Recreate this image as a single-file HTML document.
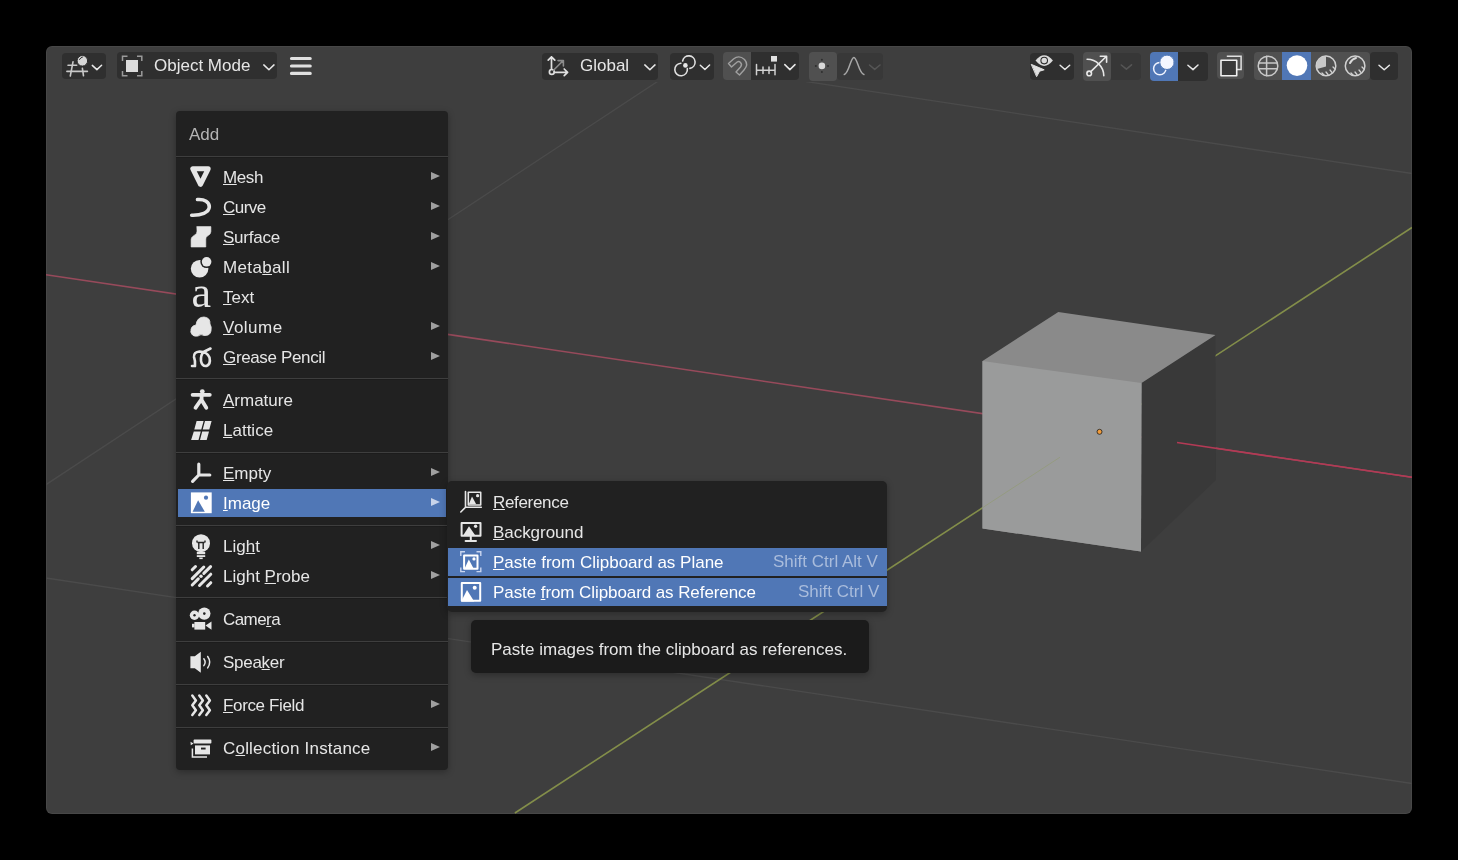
<!DOCTYPE html>
<html><head><meta charset="utf-8">
<style>
*{margin:0;padding:0;box-sizing:border-box}
html,body{width:1458px;height:860px;background:#000;overflow:hidden}
body{position:relative;font-family:"Liberation Sans",sans-serif}
.win{position:absolute;left:46px;top:46px;width:1366px;height:768px;background:#3e3e3e;border-radius:6px;overflow:hidden;box-shadow:inset 0 0 0 1px rgba(255,255,255,0.05)}
.abs{position:absolute}
.t{position:absolute;font-size:17px;line-height:20px;white-space:pre;color:#e6e6e6;will-change:transform}
.btn{position:absolute;background:#2f2f2f;border-radius:4px}
.menu{position:absolute;background:#212121;border-radius:5px;box-shadow:0 2px 7px rgba(0,0,0,0.3)}
.sep{position:absolute;height:1px;background:#3e3e3e;box-shadow:0 1px 0 #1c1c1c}
.hl{position:absolute;background:#5077b6}
.arr{position:absolute;width:0;height:0;border-left:9px solid #a0a0a0;border-top:4.6px solid transparent;border-bottom:4.6px solid transparent;margin-top:-0.2px}
u{text-decoration:underline;text-decoration-thickness:1.4px;text-underline-offset:1.4px}
</style></head><body>
<div class="win"></div>
<svg class="abs" style="left:0;top:0" width="1458" height="860" viewBox="0 0 1458 860">
  <defs><clipPath id="below"><rect x="0" y="82" width="1458" height="800"/></clipPath><clipPath id="wc"><rect x="46" y="46" width="1366" height="768" rx="6"/></clipPath></defs>
  <g clip-path="url(#wc)">
    <!-- faint grid lines -->
    <g clip-path="url(#below)">
    <line x1="46" y1="484.6" x2="684" y2="64" stroke="#4b4b4b" stroke-width="1.3"/>
    <line x1="684" y1="63" x2="1412" y2="173.5" stroke="#4b4b4b" stroke-width="1.3"/>
    </g>
    <line x1="46" y1="578" x2="1412" y2="783.5" stroke="#4b4b4b" stroke-width="1.3"/>
    <!-- red x axis -->
    <line x1="46" y1="274.8" x2="1412" y2="477.3" stroke="#974a5b" stroke-width="1.6"/>
    <!-- green y axis -->
    <line x1="514.9" y1="813" x2="1412" y2="227.5" stroke="#838e4a" stroke-width="1.6"/>
    <!-- cube -->
    <polygon points="1141.5,383 1215.5,335 1216,480 1141,551.5" fill="#393939"/>
    <polygon points="982.5,361 1058.3,312 1215.5,335 1141.5,383 1141,551.5 982.5,528.5" fill="#8a8a8a"/>
    <polygon points="982.5,361 1141.5,383 1141,551.5 982.5,528.5" fill="#9a9b9b"/>
    <line x1="1177" y1="442.6" x2="1412" y2="477.3" stroke="#b33a55" stroke-width="1.5"/>
    <line x1="1060" y1="457.2" x2="983" y2="507.4" stroke="#8c9a5a" stroke-width="1" opacity="0.4"/>
    <circle cx="1099.5" cy="431.8" r="2.5" fill="#f39c3a" stroke="#1a1a1a" stroke-width="0.8"/>
  </g>
</svg>

<!-- header buttons -->
<div class="btn" style="left:62px;top:53px;width:44px;height:26px"></div>
<div class="btn" style="left:117px;top:52px;width:160px;height:27px"></div>
<div class="t" style="left:153.5px;top:55.5px">Object Mode</div>
<div class="btn" style="left:542px;top:53px;width:116px;height:27px"></div>
<div class="t" style="left:580px;top:55.5px">Global</div>
<div class="btn" style="left:670px;top:53px;width:44px;height:27px"></div>
<div class="abs" style="left:723px;top:52px;width:28px;height:28px;background:#505050;border-radius:4px 0 0 4px"></div>
<div class="abs" style="left:751px;top:52px;width:48px;height:28px;background:#2f2f2f;border-radius:0 4px 4px 0"></div>
<div class="abs" style="left:809px;top:52px;width:28px;height:29px;background:#505050;border-radius:4px"></div>
<div class="abs" style="left:837px;top:53px;width:46px;height:27px;background:#383838;border-radius:4px"></div>
<div class="btn" style="left:1030px;top:53px;width:44px;height:27px"></div>
<div class="abs" style="left:1083px;top:52px;width:28px;height:29px;background:#505050;border-radius:4px"></div>
<div class="abs" style="left:1111px;top:53px;width:30px;height:27px;background:#373737;border-radius:0 4px 4px 0"></div>
<div class="abs" style="left:1150px;top:52px;width:28px;height:29px;background:#5077b6;border-radius:4px 0 0 4px"></div>
<div class="abs" style="left:1178px;top:52px;width:30px;height:29px;background:#2f2f2f;border-radius:0 4px 4px 0"></div>
<div class="abs" style="left:1217px;top:52px;width:27px;height:27px;background:#505050;border-radius:4px"></div>
<div class="abs" style="left:1254px;top:52px;width:28px;height:28px;background:#505050;border-radius:4px 0 0 4px"></div>
<div class="abs" style="left:1282px;top:52px;width:29px;height:28px;background:#5077b6"></div>
<div class="abs" style="left:1311px;top:52px;width:29px;height:28px;background:#505050"></div>
<div class="abs" style="left:1340px;top:52px;width:30px;height:28px;background:#505050;border-radius:0 4px 4px 0"></div>
<div class="abs" style="left:1370px;top:52px;width:28px;height:28px;background:#2f2f2f;border-radius:4px"></div>


<!-- header icons -->
<svg class="abs" style="left:0;top:0" width="1458" height="100" viewBox="0 0 1458 100" fill="none" stroke-linecap="round" stroke-linejoin="round">
  <g stroke="#c8c8c8" stroke-width="1.6">
    <path d="M68 65.2H76.7M66.9 71.4H87.4M73 61.8L70.3 76M82.4 68.3L83.5 75.8"/>
  </g>
  <circle cx="82.4" cy="60.8" r="5.3" fill="#d6d6d6" stroke="#2c2c2c" stroke-width="1"/>
  <path d="M79.5 59.5Q80.5 57.5 82.5 57" stroke="#2c2c2c" stroke-width="1"/>
  <g stroke="#e8e8e8" stroke-width="1.5">
    <path d="M92.3 65.4L96.9 69.6L101.6 65.2"/>
    <path d="M263.8 64.9L268.9 69.8L274 64.9"/>
    <path d="M644.8 64.9L649.9 69.8L655 64.9"/>
    <path d="M700.3 65.2L704.9 69.5L709.6 65"/>
    <path d="M784.8 64.6L789.9 69.6L795 64.6"/>
    <path d="M1060.1 65.3L1064.9 69.5L1069.7 65.2"/>
    <path d="M1187.9 65.2L1193 69.6L1198 65"/>
    <path d="M1379 65.2L1384.2 69.8L1389.4 65.2"/>
  </g>
  <path d="M1121.3 65L1126.4 69.2L1131.5 64.8" stroke="#555" stroke-width="1.6"/>
  <path d="M869.5 65L874.7 69.4L880 65" stroke="#555" stroke-width="1.6"/>
  <!-- object mode icon -->
  <rect x="126" y="60" width="12" height="12" fill="#dcdcdc"/>
  <path d="M122.5 61V56.2H127.5M137 56.2H141.8V61M141.8 71V75.8H137M127.5 75.8H122.5V71" stroke="#9a9a9a" stroke-width="1.5" stroke-linecap="butt" stroke-linejoin="miter"/>
  <!-- hamburger -->
  <path d="M291.5 58.5H310.2M291.5 66H310.2M291.5 73.4H310.2" stroke="#e0e0e0" stroke-width="3.2"/>
  <!-- transform orientation icon -->
  <g stroke="#e0e0e0" stroke-width="1.7">
    <path d="M551.5 69V56.8M548.2 60.2L551.5 56.8L554.8 60.2"/>
    <path d="M554.5 72.3H567.5M564.2 69L567.6 72.3L564.2 75.6"/>
    <circle cx="551.8" cy="71.9" r="2.4"/>
  </g>
  <path d="M553.5 70.2L563 60.8M558 60.6H563.4V66" stroke="#8c8c8c" stroke-width="1.6"/>
  <!-- pivot icon -->
  <g stroke="#e0e0e0" stroke-width="1.6">
    <path d="M687.34 68.62A6.3 6.3 0 1 1 680.88 63.20"/>
    <path d="M682.62 61.00A6.3 6.3 0 1 1 689.89 68.40"/>
  </g>
  <circle cx="685.4" cy="65.4" r="2.3" fill="#e8e8e8"/>
  <!-- magnet -->
  <path d="M728.5 63.5L733.5 59Q739 54.5 744.5 59.5Q749 64.5 744 70L739.5 75L736 72L740.5 67Q742.5 64.5 740.5 62.5Q738.5 60.5 736 63L731.5 67Z" stroke="#a0a0a0" stroke-width="1.4"/>
  <!-- snap target -->
  <g stroke="#d0d0d0" stroke-width="1.5">
    <path d="M756.5 64.5V74.8M775 64.5V74.8M763 67V73.5M769 67V73.5M756.5 70.3H775"/>
  </g>
  <rect x="771" y="56" width="6" height="5.6" fill="#e0e0e0"/>
  <!-- proportional -->
  <circle cx="821.9" cy="65.9" r="3.3" fill="#d8d8d8"/>
  <g fill="#2e2e2e"><circle cx="821.9" cy="59.8" r="1"/><circle cx="821.9" cy="72" r="1"/><circle cx="815.8" cy="65.9" r="1"/><circle cx="828" cy="65.9" r="1"/></g>
  <!-- falloff -->
  <path d="M844.3 74.5C849 73.5 850.5 57.5 853.9 57.5C857.3 57.5 858.8 73.5 863.9 74.5" stroke="#a8a8a8" stroke-width="1.5"/>
  <!-- visibility -->
  <path d="M1035.5 60.6Q1044.2 50 1052.9 60.6Q1044.2 71.2 1035.5 60.6Z" fill="#dcdcdc"/>
  <circle cx="1044.2" cy="60.6" r="3.3" fill="#dcdcdc" stroke="#2c2c2c" stroke-width="1.1"/>
  <path d="M1031.6 64.5L1044.2 69.8L1039.6 71.2L1036.8 76.3Z" fill="#e0e0e0" stroke="#e0e0e0" stroke-width="1"/>
  <!-- gizmo -->
  <g stroke="#e8e8e8" stroke-width="1.6">
    <path d="M1087.1 59.3A16.5 16.5 0 0 1 1103.8 75.8"/>
    <path d="M1090.8 71.6L1106 56.8M1100.3 56.2H1106.6V62.3"/>
    <circle cx="1089.2" cy="73.4" r="2.3"/>
  </g>
  <!-- overlays -->
  <circle cx="1159.8" cy="68.6" r="6.2" stroke="#f0f4ff" stroke-width="1.5"/>
  <circle cx="1167" cy="62.3" r="7.2" fill="#f4f6ff" stroke="#5077b6" stroke-width="1"/>
  <!-- xray -->
  <path d="M1226.8 56.2H1241.1V69.6H1236.7" stroke="#e0e0e0" stroke-width="1.5" stroke-linecap="butt" stroke-linejoin="miter"/>
  <rect x="1221" y="60.3" width="15.7" height="15.4" fill="#393939" stroke="#f0f0f0" stroke-width="1.6"/>
  <!-- wireframe -->
  <g stroke="#c8c8c8" stroke-width="1.5">
    <circle cx="1268" cy="66" r="9.8"/>
    <path d="M1259 63H1277M1259 68.8H1277M1266.6 56.3V75.7"/>
  </g>
  <!-- solid -->
  <circle cx="1297" cy="65.6" r="10.3" fill="#ffffff"/>
  <!-- material -->
  <circle cx="1326" cy="65.9" r="9.8" stroke="#d0d0d0" stroke-width="1.5"/>
  <path d="M1326 56.1V66.5L1317 69A9.8 9.8 0 0 1 1326 56.1Z" fill="#c8c8c8"/>
  <path d="M1322 73L1324 75M1326 72L1328 74.5M1330 70L1332 72.5M1333 67L1335 69" stroke="#d0d0d0" stroke-width="1.3"/>
  <!-- rendered -->
  <circle cx="1355.1" cy="65.9" r="9.8" stroke="#d0d0d0" stroke-width="1.5"/>
  <path d="M1350 63Q1352 59 1356 58" stroke="#d8d8d8" stroke-width="2"/>
  <path d="M1351 73L1353 75M1355 72L1357 74.5M1359 70L1361 72.5M1362 67L1364 69" stroke="#d0d0d0" stroke-width="1.3"/>
</svg>

<!-- main menu -->
<div class="menu" style="left:176px;top:111px;width:272px;height:659px;border-radius:4px"></div>
<div class="t" style="left:189px;top:124.5px;color:#b4b4b4">Add</div>
<div class="sep" style="left:176px;top:156px;width:272px"></div>

<div class="hl" style="left:178px;top:489px;width:268px;height:28px"></div>

<div class="t" style="left:222.7px;top:168px;letter-spacing:-0.400px"><u>M</u>esh</div>
<div class="t" style="left:222.7px;top:198px;letter-spacing:-0.550px"><u>C</u>urve</div>
<div class="t" style="left:222.7px;top:228px;letter-spacing:-0.250px"><u>S</u>urface</div>
<div class="t" style="left:222.7px;top:258px;letter-spacing:0.357px">Meta<u>b</u>all</div>
<div class="t" style="left:222.7px;top:288px"><u>T</u>ext</div>
<div class="t" style="left:222.7px;top:318px;letter-spacing:0.480px"><u>V</u>olume</div>
<div class="t" style="left:222.7px;top:348px;letter-spacing:-0.358px"><u>G</u>rease Pencil</div>
<div class="sep" style="left:176px;top:378px;width:272px"></div>
<div class="t" style="left:222.7px;top:391px"><u>A</u>rmature</div>
<div class="t" style="left:222.7px;top:421px"><u>L</u>attice</div>
<div class="sep" style="left:176px;top:452px;width:272px"></div>
<div class="t" style="left:222.7px;top:464px"><u>E</u>mpty</div>
<div class="t" style="left:222.7px;top:494px;color:#fff"><u>I</u>mage</div>
<div class="sep" style="left:176px;top:525px;width:272px"></div>
<div class="t" style="left:222.7px;top:537px">Lig<u>h</u>t</div>
<div class="t" style="left:222.7px;top:567px">Light <u>P</u>robe</div>
<div class="sep" style="left:176px;top:597px;width:272px"></div>
<div class="t" style="left:222.7px;top:610px;letter-spacing:-0.560px">Came<u>r</u>a</div>
<div class="sep" style="left:176px;top:641px;width:272px"></div>
<div class="t" style="left:222.7px;top:653px;letter-spacing:-0.283px">Spea<u>k</u>er</div>
<div class="sep" style="left:176px;top:684px;width:272px"></div>
<div class="t" style="left:222.7px;top:696px;letter-spacing:-0.360px"><u>F</u>orce Field</div>
<div class="sep" style="left:176px;top:727px;width:272px"></div>
<div class="t" style="left:222.7px;top:739px;letter-spacing:0.200px">C<u>o</u>llection Instance</div>

<!-- arrows -->
<div class="arr" style="left:431px;top:172.5px"></div>
<div class="arr" style="left:431px;top:202.5px"></div>
<div class="arr" style="left:431px;top:232.5px"></div>
<div class="arr" style="left:431px;top:262.5px"></div>
<div class="arr" style="left:431px;top:322.5px"></div>
<div class="arr" style="left:431px;top:352.5px"></div>
<div class="arr" style="left:431px;top:468.5px"></div>
<div class="arr" style="left:431px;top:498.5px;border-left-color:#c8d4ea"></div>
<div class="arr" style="left:431px;top:541.5px"></div>
<div class="arr" style="left:431px;top:571.5px"></div>
<div class="arr" style="left:431px;top:700.5px"></div>
<div class="arr" style="left:431px;top:743.5px"></div>

<!-- submenu -->
<div class="menu" style="left:447px;top:481px;width:440px;height:131px"></div>
<div class="hl" style="left:448px;top:548px;width:439px;height:28px"></div>
<div class="hl" style="left:448px;top:578px;width:439px;height:28px"></div>
<div class="t" style="left:493px;top:493px;letter-spacing:-0.325px"><u>R</u>eference</div>
<div class="t" style="left:493px;top:523px;letter-spacing:-0.044px"><u>B</u>ackground</div>
<div class="t" style="left:493px;top:553px;color:#fff"><u>P</u>aste from Clipboard as Plane</div>
<div class="t" style="left:493px;top:583px;color:#fff;letter-spacing:-0.081px">Paste <u>f</u>rom Clipboard as Reference</div>
<div class="t" style="left:773px;top:552px;color:#a9bcdc">Shift Ctrl Alt V</div>
<div class="t" style="left:798px;top:582px;color:#a9bcdc">Shift Ctrl V</div>

<!-- tooltip -->
<div class="menu" style="left:471px;top:620px;width:398px;height:53px;background:#1b1b1b"></div>
<div class="t" style="left:490.5px;top:640px">Paste images from the clipboard as references.</div>

<!-- menu icons -->
<svg class="abs" style="left:0;top:0" width="1458" height="860" viewBox="0 0 1458 860" fill="none" stroke-linecap="round" stroke-linejoin="round">
  <g fill="#e6e6e6" stroke="#e6e6e6">
  <!-- mesh -->
  <path d="M192.8 168.8H208.2L200.5 184.3Z" fill="none" stroke-width="5"/>
  <!-- curve -->
  <path d="M197.5 199.5C204.5 199 209.5 202 209.3 207C209 212.5 201 215.5 191.7 215.2" fill="none" stroke-width="3.6"/>
  <!-- surface -->
  <path d="M197 226.6H210.9V231.5Q210.9 233.8 208.6 235.2L207.4 236Q205.8 237.2 205.8 239V247H191.1V239.5Q191.1 237.4 193 236.2L194.8 235Q197 233.6 197 231.5Z" stroke-width="0.6"/>
  <!-- metaball -->
  <circle cx="199.6" cy="268.7" r="8.8" stroke="none"/>
  <circle cx="206.6" cy="261.8" r="6.3" fill="#212121" stroke="none"/>
  <circle cx="206.6" cy="261.8" r="4.8" stroke="none"/>
  <!-- volume -->
  <path d="M191 332Q190 326 196 325Q197 317 204 317Q210.5 317.5 210 324Q212 327 211 331Q210 336 204 335.5Q201 333.5 198 336Q191.5 337 191 332Z" stroke-width="0.8"/>
  <!-- grease pencil -->
  <path d="M192 366H195Q195.5 361 194 357Q193.5 352 199.5 351.5Q207 351.5 209.5 357.5Q211 364 206.5 366Q202 366.5 201 361Q200.5 355 203.5 352L210.5 348.5" fill="none" stroke-width="2.6"/>
  <!-- armature -->
  <circle cx="202.3" cy="391.6" r="2.4" stroke="none"/>
  <path d="M192.6 394.8H209.8M201.6 395V400M201.3 399.5L195.5 407.8M201.3 399.5L206.3 407.8" fill="none" stroke-width="3.8"/>
  <!-- lattice -->
  <path d="M196.6 421H203.6L201.3 429.6H194.3ZM205 421H211.6L209.3 429.6H202.7ZM193.8 431.4H200.8L198.5 440H191.1ZM202.2 431.4H209L206.7 440H200Z" stroke="none"/>
  <!-- empty -->
  <path d="M198.8 464.2V475H209.8M198.8 475L192.6 481.3" fill="none" stroke-width="3.2"/>
  <!-- light -->
  <circle cx="201" cy="543.2" r="9" stroke="none"/>
  <path d="M197.5 542.5H204.5M198.8 542.5V549M203.2 542.5V549M197 540.5V542.5M205 540.5V542.5" fill="none" stroke="#212121" stroke-width="1.4" stroke-linecap="butt"/>
  <rect x="196.8" y="552" width="8.4" height="2.2" stroke="none"/>
  <rect x="196.8" y="555.2" width="8.4" height="1.8" stroke="none"/>
  <rect x="199.3" y="557.5" width="3.4" height="1.6" stroke="none"/>
  <!-- light probe -->
  <g fill="none" stroke-width="3">
    <path d="M192.2 569.8L195.5 566.5"/>
    <path d="M192.2 578.6L203.8 567"/>
    <path d="M192.2 585L198.3 578.9M203.8 573.4L210.6 566.6"/>
    <path d="M199.5 585.5L210.8 574.2"/>
    <path d="M207.5 586L210.8 582.7"/>
  </g>
  <circle cx="201" cy="576.2" r="1.7" stroke="none"/>
  <!-- camera -->
  <circle cx="194.5" cy="615.2" r="4.7" stroke="none"/>
  <circle cx="204.3" cy="613.6" r="6.2" stroke="none"/>
  <circle cx="194.5" cy="615.2" r="1.2" fill="#212121" stroke="none"/>
  <circle cx="204.3" cy="613.6" r="1.3" fill="#212121" stroke="none"/>
  <rect x="194.4" y="622" width="10.8" height="7.6" stroke="none"/>
  <path d="M205.5 625.5L211.5 621.6V629.8Z" stroke="none"/>
  <rect x="192" y="623.8" width="2.6" height="3.6" stroke="none"/>
  <!-- speaker -->
  <path d="M190.4 656.3H194.8L200.8 651.8V672.7L194.8 668.3H190.4Z" stroke="none"/>
  <path d="M203.83 658.81A5.5 5.5 0 0 1 203.83 665.59M207.69 656.46A10 10 0 0 1 207.69 667.94" fill="none" stroke-width="1.5"/>
  <!-- force field -->
  <path d="M192.3 695.5L195.9 700.5L192.3 705.3L195.9 710.2L192.3 715M199.3 695.5L202.9 700.5L199.3 705.3L202.9 710.2L199.3 715M206.3 695.5L209.9 700.5L206.3 705.3L209.9 710.2L206.3 715" fill="none" stroke-width="2.5"/>
  <!-- collection instance -->
  <rect x="193.6" y="739.6" width="17.8" height="3.9" rx="0.8" stroke="none"/>
  <rect x="195" y="745.4" width="15" height="9" stroke="none"/>
  <rect x="201" y="747.6" width="4.6" height="1.9" fill="#212121" stroke="none"/>
  <path d="M192.4 748.5V757H207" fill="none" stroke-width="1.5" stroke-linecap="butt" stroke-linejoin="miter"/>
  <path d="M190.5 741.8L193.6 743.6L190.8 745.2Z" stroke="none"/>
  </g>
  <!-- text icon -->
  <text x="191.5" y="306.8" font-family="Liberation Serif" font-size="44" fill="#e6e6e6">a</text>
  <!-- image (highlighted) -->
  <rect x="190.9" y="492.4" width="20.8" height="20.8" fill="#ffffff"/>
  <path d="M192.6 511.7L198.1 500.2L204.8 511.7Z" fill="#5077b6"/>
  <circle cx="206" cy="497.7" r="2.1" fill="#5077b6"/>
  <!-- submenu icons -->
  <g stroke="#e6e6e6">
    <path d="M465.5 491.5V507.3H481.3M465.5 507.3L460.8 512" stroke-width="1.6"/>
    <rect x="468.3" y="492.2" width="12.4" height="12.8" stroke-width="1.6"/>
    <rect x="461.6" y="522.9" width="18.9" height="12.9" stroke-width="2"/>
    <path d="M470.8 536.5V540.2M465.6 541H476" stroke-width="2"/>
  </g>
  <g fill="#e6e6e6">
    <path d="M468.8 504.2L472 496.5L476.2 504.2Z"/>
    <circle cx="477.6" cy="495.7" r="1.6"/>
    <path d="M463.4 535L469 526.2L475 535Z"/>
    <circle cx="475.6" cy="526.2" r="1.7"/>
  </g>
  <path d="M460.8 556V551.8H465M476.5 551.8H480.8V556M480.8 567.5V571.6H476.5M465 571.6H460.8V567.5" stroke="#c9d6f0" stroke-width="1.4" stroke-linecap="butt" stroke-linejoin="miter"/>
  <rect x="464.1" y="555.4" width="13.4" height="13.4" stroke="#ffffff" stroke-width="2"/>
  <path d="M464.6 568.6L468.8 559.4L473.6 568.6Z" fill="#ffffff"/>
  <circle cx="474" cy="558.9" r="1.6" fill="#ffffff"/>
  <rect x="461.8" y="583" width="18.4" height="17.8" stroke="#ffffff" stroke-width="2"/>
  <path d="M461.2 601.5L467 590L474.2 601.5Z" fill="#ffffff"/>
  <circle cx="474.7" cy="587.7" r="2" fill="#ffffff"/>
</svg>
</body></html>
